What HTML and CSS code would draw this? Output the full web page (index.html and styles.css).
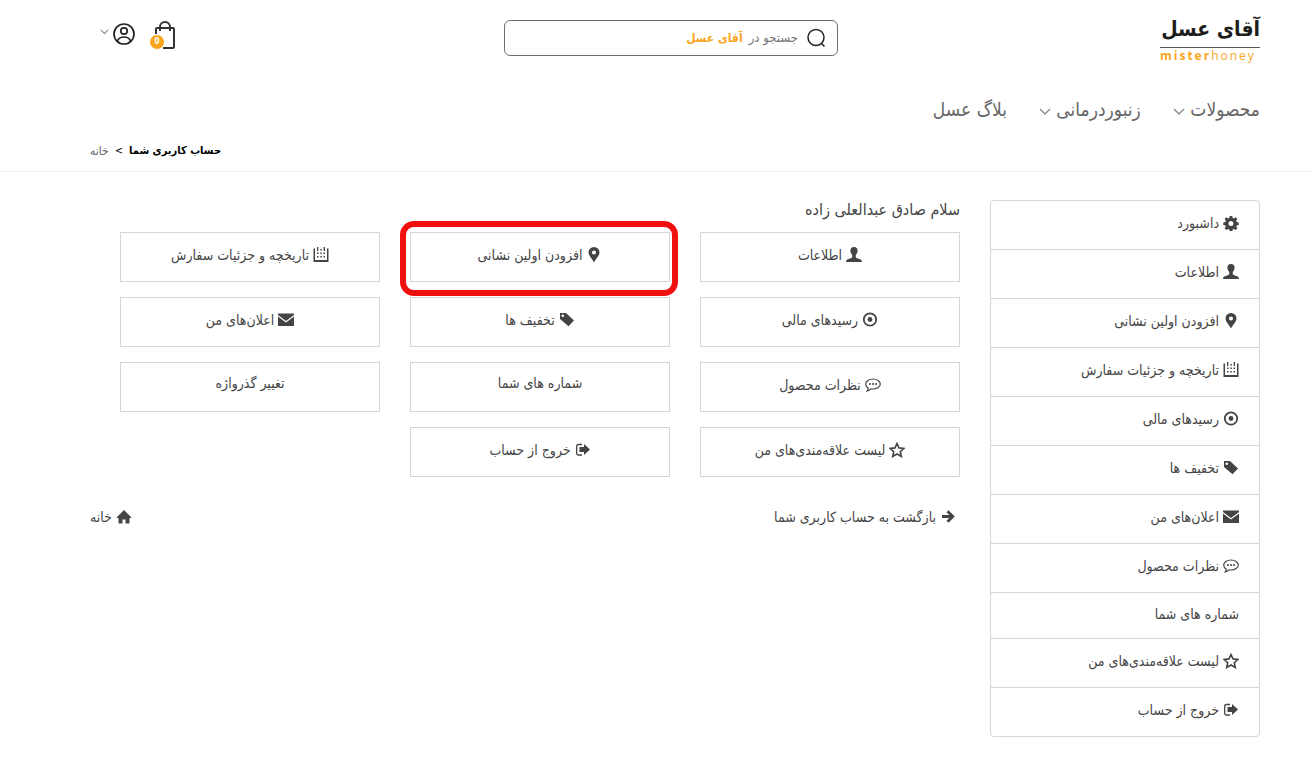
FILE: index.html
```html
<!DOCTYPE html>
<html lang="fa" dir="rtl">
<head>
<meta charset="UTF-8">
<meta name="viewport" content="width=device-width, initial-scale=1">
<title>حساب کاربری شما</title>
<link rel="stylesheet" href="styles.css">
</head>
<body>
<svg class="sprite" aria-hidden="true">
    <symbol id="i-gear" viewBox="0 0 16 16"><path fill-rule="evenodd" d="M6.700 1h2.600l.4 2 1.200.5 1.700-1.200 1.800 1.800-1.200 1.700.5 1.200 2 .4v2.600l-2 .4-.5 1.200 1.200 1.700-1.800 1.800-1.700-1.200-1.200.5-.4 2H6.700l-.4-2-1.200-.5-1.700 1.200-1.800-1.800 1.200-1.700-.5-1.200-2-.4V7.400l2-.4.5-1.200-1.200-1.700 1.800-1.800 1.700 1.200 1.200-.5zM8 6.100a2.500 2.500 0 1 0 0 5 2.500 2.500 0 0 0 0-5z"/></symbol>
    <symbol id="i-user" viewBox="0 0 16 16"><path d="M8 0c2.500 0 3.600 1.500 3.600 3.600 0 1.700-.7 3.400-1.800 4.400v2c0 .8 1.200 1.200 2.800 1.700 2.200.6 3.400 1.200 3.400 3.300H0c0-2.100 1.200-2.700 3.400-3.300 1.600-.5 2.800-.9 2.800-1.700V8c-1.100-1-1.800-2.700-1.800-4.400C4.400 1.500 5.500 0 8 0z"/></symbol>
    <symbol id="i-pin" viewBox="0 0 16 16"><path fill-rule="evenodd" d="M8 0a5.500 5.500 0 0 1 5.500 5.500C13.500 9 9.500 12 8 15.500 6.500 12 2.500 9 2.500 5.500A5.500 5.500 0 0 1 8 0zm0 3.500a2 2 0 1 0 0 4 2 2 0 0 0 0-4z"/></symbol>
    <symbol id="i-calendar" viewBox="0 0 16 16"><path d="M.500 1.500H2V13h12V1.500h1.500v13.500H.5zM4 0h1.300v4H4zM10.700 0H12v4h-1.300zM4 5.500h1.500V7H4zM7.300 5.500h1.500V7H7.300zM10.500 5.500H12V7h-1.500zM4 9h1.500v1.500H4zM7.300 9h1.500v1.500H7.300zM10.500 9H12v1.500h-1.500zM7.300 2h1.500v1.500H7.300z"/></symbol>
    <symbol id="i-target" viewBox="0 0 16 16"><circle cx="8" cy="7.500" r="6.200" fill="none" stroke="currentColor" stroke-width="1.800"/><circle cx="8" cy="7.500" r="2.400"/></symbol>
    <symbol id="i-tag" viewBox="0 0 16 16"><path fill-rule="evenodd" d="M1 1h6l8 7.500-5.500 5.800L1 7zm2.800 1.500a1.300 1.300 0 1 0 0 2.600 1.300 1.300 0 0 0 0-2.600z"/></symbol>
    <symbol id="i-mail" viewBox="0 0 16 16"><path d="M0 1.500h16V3L8 9 0 3zM0 4.500l8 6 8-6v9.500H0z"/></symbol>
    <symbol id="i-comment" viewBox="0 0 16 16"><path fill="none" stroke="currentColor" stroke-width="1.200" d="M8 2c4 0 7.300 2.200 7.300 5s-3.300 5-7.300 5c-.8 0-1.500-.1-2.200-.2-1 1-2.200 1.700-3.500 2 .6-.8.9-1.700.9-2.800C1.600 10.100.7 8.700.7 7 .7 4.200 4 2 8 2z"/><circle cx="5" cy="7" r="1"/><circle cx="8" cy="7" r="1"/><circle cx="11" cy="7" r="1"/></symbol>
    <symbol id="i-star" viewBox="0 0 16 16"><path fill="none" stroke="currentColor" stroke-width="1.600" d="M8 1.500l2 4.400 4.900.5-3.600 3.300 1 4.800L8 12l-4.300 2.500 1-4.800L1.100 6.400 6 5.900z"/></symbol>
    <symbol id="i-exit" viewBox="0 0 16 16"><path d="M9 2l6 5.500L9 13v-3H4.500V5H9z"/><path fill="none" stroke="currentColor" stroke-width="1.300" d="M7 2.500H3.200Q1.700 2.500 1.700 4v7.500q0 1.500 1.500 1.500H7"/></symbol>
    <symbol id="i-arrow" viewBox="0 0 16 16"><path fill="none" stroke="currentColor" stroke-width="2.800" d="M2 7.500h10M7.500 2.200l5.300 5.300-5.300 5.300"/></symbol>
    <symbol id="i-home" viewBox="0 0 16 16"><path d="M8 1l7.500 7.500-.6.600H13.500V14.500h-4v-4h-3v4h-4V9.100H1.100L.5 8.500z"/></symbol>
    <symbol id="i-down" viewBox="0 0 12 8"><path fill="none" stroke="currentColor" stroke-width="1.400" d="M1 1l5 5 5-5"/></symbol>
</svg>

<header class="page-header">
    <div class="wrap">
        <div class="top-bar">
            <a class="logo" href="#">
                <span class="logo-fa">آقای عسل</span>
                <span class="logo-en"><b>mister</b>honey</span>
            </a>
            <form class="search" role="search">
                <input type="text" id="search">
                <label for="search">
                    <svg viewBox="0 0 20 20"><circle cx="10" cy="9.500" r="8"/><path d="M15.500 15.500l3 3"/></svg>
                    <span>جستجو در</span>
                    <b>آقای عسل</b>
                </label>
            </form>
            <div class="tools">
                <a class="cart" href="#" aria-label="سبد خرید">
                    <svg viewBox="0 0 22 30"><path d="M2 14V9q0-1 1-1h16q1 0 1 1v18q0 1-1 1H9M6 11V7a5 5 0 0 1 10 0v4"/></svg>
                    <span class="cart-count">0</span>
                </a>
                <button type="button" class="account" aria-label="حساب کاربری">
                    <svg class="avatar" viewBox="0 0 22 22"><circle cx="11" cy="11" r="10"/><circle cx="11" cy="8" r="3.200"/><path d="M4.500 18c1-2.800 3.500-4 6.500-4s5.500 1.200 6.500 4"/></svg>
                    <svg class="chevron"><use href="#i-down"/></svg>
                </button>
            </div>
        </div>
        <nav class="main-nav">
            <a href="#">محصولات <svg class="nav-arrow"><use href="#i-down"/></svg></a>
            <a href="#">زنبوردرمانی <svg class="nav-arrow"><use href="#i-down"/></svg></a>
            <a href="#">بلاگ عسل</a>
        </nav>
        <div class="breadcrumb" dir="ltr">
            <a href="#">خانه</a>
            <span>&lt;</span>
            <b>حساب کاربری شما</b>
        </div>
    </div>
</header>

<main class="wrap account-page">
    <aside>
        <ul class="side-menu">
            <li><a href="#"><svg class="icon"><use href="#i-gear"/></svg>داشبورد</a></li>
            <li><a href="#"><svg class="icon"><use href="#i-user"/></svg>اطلاعات</a></li>
            <li><a href="#"><svg class="icon"><use href="#i-pin"/></svg>افزودن اولین نشانی</a></li>
            <li><a href="#"><svg class="icon"><use href="#i-calendar"/></svg>تاریخچه و جزئیات سفارش</a></li>
            <li><a href="#"><svg class="icon"><use href="#i-target"/></svg>رسیدهای مالی</a></li>
            <li><a href="#"><svg class="icon"><use href="#i-tag"/></svg>تخفیف ها</a></li>
            <li><a href="#"><svg class="icon"><use href="#i-mail"/></svg>اعلان‌های من</a></li>
            <li><a href="#"><svg class="icon"><use href="#i-comment"/></svg>نظرات محصول</a></li>
            <li><a class="plain" href="#">شماره های شما</a></li>
            <li><a href="#"><svg class="icon"><use href="#i-star"/></svg>لیست علاقه‌مندی‌های من</a></li>
            <li><a href="#"><svg class="icon"><use href="#i-exit"/></svg>خروج از حساب</a></li>
        </ul>
    </aside>
    <section class="content">
        <h1>سلام صادق عبدالعلی زاده</h1>
        <div class="tiles">
            <a href="#"><svg class="icon"><use href="#i-user"/></svg>اطلاعات</a>
            <a class="marked" href="#"><svg class="icon"><use href="#i-pin"/></svg>افزودن اولین نشانی</a>
            <a href="#"><svg class="icon"><use href="#i-calendar"/></svg>تاریخچه و جزئیات سفارش</a>
            <a href="#"><svg class="icon"><use href="#i-target"/></svg>رسیدهای مالی</a>
            <a href="#"><svg class="icon"><use href="#i-tag"/></svg>تخفیف ها</a>
            <a href="#"><svg class="icon"><use href="#i-mail"/></svg>اعلان‌های من</a>
            <a href="#"><svg class="icon"><use href="#i-comment"/></svg>نظرات محصول</a>
            <a class="plain" href="#">شماره های شما</a>
            <a class="plain" href="#">تغییر گذرواژه</a>
            <a href="#"><svg class="icon"><use href="#i-star"/></svg>لیست علاقه‌مندی‌های من</a>
            <a href="#"><svg class="icon"><use href="#i-exit"/></svg>خروج از حساب</a>
        </div>
        <div class="footer-links">
            <a href="#"><svg class="icon"><use href="#i-arrow"/></svg>بازگشت به حساب کاربری شما</a>
            <a href="#"><svg class="icon"><use href="#i-home"/></svg>خانه</a>
        </div>
    </section>
</main>
</body>
</html>
```
FILE: styles.css
```css
*{box-sizing:border-box;}
body{
    margin:0;
    background:#fff;
    color:#444;
    font-family:"DejaVu Sans Condensed","DejaVu Sans",sans-serif;
    font-size:14px;
    line-height:20px;
}
a{color:inherit;text-decoration:none;}
.sprite{display:none;}
.wrap{padding:0 53px 0 90px;}

/* header */
.page-header{border-bottom:1px solid #eee;}
.top-bar{
    display:grid;
    grid-template-columns:1fr 334px 414px;
    padding-top:12px;
    height:84px;
}
.logo{
    display:flex;
    flex-direction:column;
    width:100px;
}
.logo-fa{
    color:#1d1d1b;
    font-size:21px;
    font-weight:bold;
    line-height:35px;
    border-bottom:1px solid #555;
    white-space:nowrap;
}
.logo-en{
    direction:ltr;
    color:#f9a61c;
    font-family:"Open Sans",sans-serif;
    font-size:12px;
    line-height:15px;
    letter-spacing:2px;
}
.search{position:relative;height:36px;margin-top:8px;}
.search input{
    width:100%;
    height:36px;
    padding:0 40px 0 10px;
    border:1px solid #6c7074;
    border-radius:6px;
    font:inherit;
}
.search label{
    position:absolute;
    top:0;
    right:12px;
    height:36px;
    display:flex;
    align-items:center;
    gap:6px;
    color:#777;
    font-size:13px;
    pointer-events:none;
}
.search svg{width:20px;height:20px;margin-left:2px;fill:none;stroke:#222;stroke-width:1.5;}
.search b{color:#f9a61c;font-size:12px;}
.tools{
    display:flex;
    justify-content:flex-end;
    gap:15px;
    padding:8px 0 0 10px;
}
.cart{position:relative;width:26px;height:30px;}
.cart svg{width:22px;height:30px;fill:none;stroke:#333;stroke-width:2;}
.cart-count{
    position:absolute;
    left:0;
    bottom:1px;
    width:14px;
    height:14px;
    border-radius:50%;
    background:#f9a61c;
    color:#fff;
    font-size:8px;
    font-weight:bold;
    line-height:14px;
    text-align:center;
}
.account{
    display:flex;
    gap:4px;
    height:26px;
    padding:3px 0 0;
    border:none;
    background:none;
    color:#777;
}
.avatar{width:22px;height:22px;fill:none;stroke:#222;stroke-width:1.7;}
.chevron{width:9px;height:6px;margin-top:6px;}
.main-nav{
    display:flex;
    gap:32px;
    height:50px;
    color:#666;
    font-size:19px;
    line-height:50px;
}
.nav-arrow{width:12px;height:8px;color:#888;}
.breadcrumb{
    display:flex;
    gap:6px;
    height:37px;
    color:#000;
    font-size:11px;
    line-height:34px;
}
.breadcrumb a{color:#666;font-size:12px;}

/* account */
.account-page{
    display:flex;
    gap:30px;
    padding-top:28px;
    padding-bottom:27px;
}
aside{flex:0 0 270px;}
.side-menu{
    margin:0;
    padding:0;
    list-style:none;
    border:1px solid #d6d6d6;
    border-radius:4px;
}
.side-menu li + li{border-top:1px solid #d6d6d6;}
.side-menu a{
    display:flex;
    align-items:center;
    height:48px;
    padding:0 20px 4px;
}
.side-menu .plain{height:45px;}
.icon{
    flex:none;
    width:16px;
    height:16px;
    margin-left:4px;
    fill:currentColor;
}
.content{flex:1;}
h1{
    margin:0;
    height:32px;
    font-size:16px;
    font-weight:normal;
    line-height:20px;
}
.tiles{
    display:grid;
    grid-template-columns:repeat(3,1fr);
    gap:15px 30px;
    padding-left:30px;
}
.tiles a{
    display:flex;
    align-items:center;
    justify-content:center;
    position:relative;
    height:50px;
    padding-bottom:4px;
    border:1px solid #d6d6d6;
}
.tiles .plain{padding-bottom:8px;}
.marked::after{
    content:"";
    position:absolute;
    inset:-12px -9px -15px -11px;
    border:6px solid #f01010;
    border-radius:14px;
}
.footer-links{
    display:flex;
    justify-content:space-between;
    margin-top:30px;
    padding-right:4px;
}
.footer-links a{display:flex;align-items:center;}
```
